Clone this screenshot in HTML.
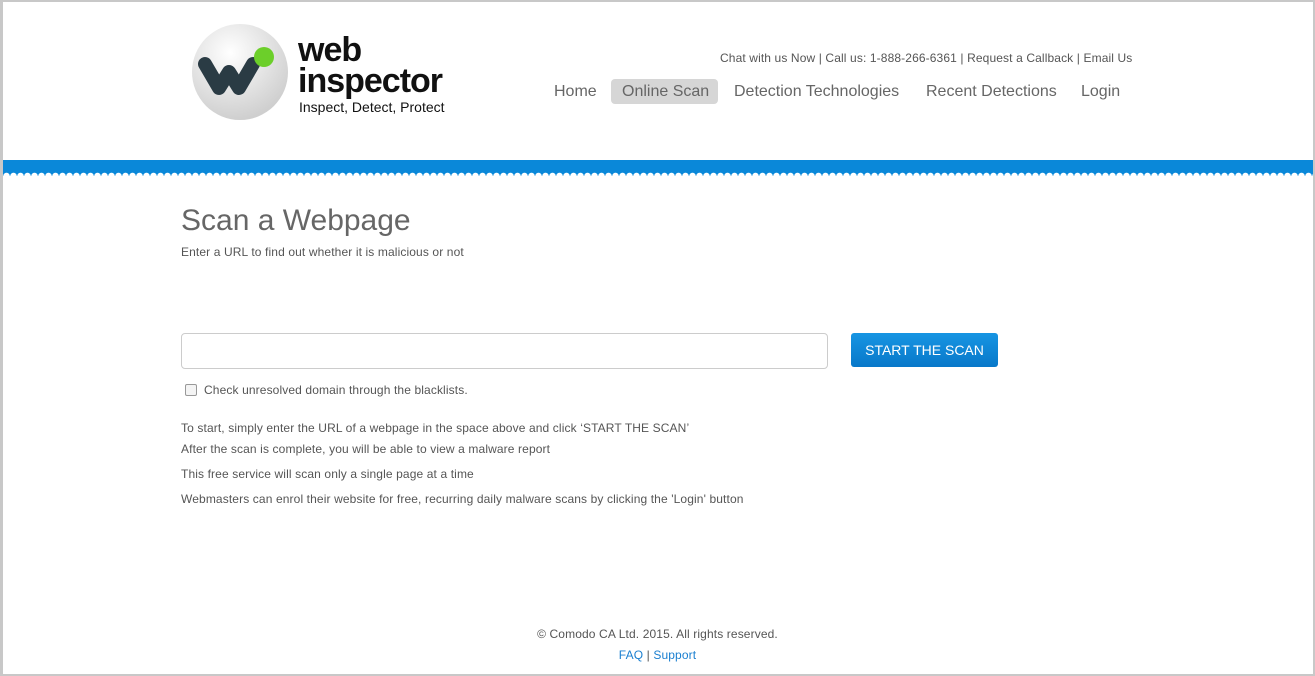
<!DOCTYPE html>
<html><head><meta charset="utf-8"><style>
*{margin:0;padding:0;box-sizing:border-box}
html,body{width:1315px;height:676px;overflow:hidden;background:#fff;font-family:"Liberation Sans",Arial,sans-serif}
.frame{position:absolute;left:0;top:0;width:1315px;height:676px;border:2px solid #c8c8c8;border-left-width:3px}
.abs{position:absolute;white-space:nowrap}
.nav a{position:absolute;top:81px;font-size:16px;color:#666;line-height:22px}
.band{position:absolute;left:3px;right:2px;top:160px;height:11px;background:#0a88d9}
.scallop{position:absolute;left:3px;right:2px;top:171px;height:5px;background:radial-gradient(circle at 3.5px 5px,#fff 3px,transparent 3.5px) 0 0/7px 5px,#0a88d9}
.sm{font-size:12px;color:#555;letter-spacing:0.12px}
</style></head><body>
<div class="frame"></div>
<svg class="abs" style="left:190px;top:22px" width="110" height="102" viewBox="0 0 110 102">
<defs><radialGradient id="g" cx="40%" cy="30%" r="70%"><stop offset="0" stop-color="#fff"/><stop offset="1" stop-color="#cfcfcf"/></radialGradient></defs>
<circle cx="50" cy="50" r="48" fill="url(#g)"/>
<path d="M15 42 L29 66 L39 50 L49 66 L63 42" fill="none" stroke="#2a3b44" stroke-width="14" stroke-linecap="round" stroke-linejoin="round"/>
<circle cx="74" cy="35" r="10" fill="#6ccf2a"/>
</svg>
<div class="abs" style="left:298px;top:33px;font-size:34px;font-weight:bold;color:#111;line-height:34px;letter-spacing:-1px">web</div>
<div class="abs" style="left:298px;top:64px;font-size:34px;font-weight:bold;color:#111;line-height:34px;letter-spacing:-1px">inspector</div>
<div class="abs" style="left:299px;top:99px;font-size:14px;color:#111">Inspect, Detect, Protect</div>
<div class="abs" style="left:720px;top:51px;font-size:12px;color:#555;letter-spacing:0.12px">Chat with us Now | Call us: 1-888-266-6361 | Request a Callback | Email Us</div>
<div class="nav">
<a style="left:554px">Home</a>
<div class="abs" style="left:611px;top:79px;width:107px;height:25px;background:#d6d6d6;border-radius:4px"></div>
<a style="left:622px">Online Scan</a>
<a style="left:734px">Detection Technologies</a>
<a style="left:926px">Recent Detections</a>
<a style="left:1081px">Login</a>
</div>
<div class="band"></div><div class="scallop"></div>
<div class="abs" style="left:181px;top:204px;font-size:30px;color:#666">Scan a Webpage</div>
<div class="abs sm" style="left:181px;top:245px">Enter a URL to find out whether it is malicious or not</div>
<div class="abs" style="left:181px;top:333px;width:647px;height:36px;border:1px solid #ccc;border-radius:4px"></div>
<div class="abs" style="left:851px;top:333px;width:147px;height:34px;background:linear-gradient(#1795e3,#0878c9);border-radius:3px;color:#fff;font-size:14px;line-height:34px;text-align:center">START THE SCAN</div>
<div class="abs" style="left:185px;top:384px;width:12px;height:12px;border:1px solid #999;border-radius:2px;background:#f4f4f4"></div>
<div class="abs sm" style="left:204px;top:383px">Check unresolved domain through the blacklists.</div>
<div class="abs sm" style="left:181px;top:421px">To start, simply enter the URL of a webpage in the space above and click ‘START THE SCAN’</div>
<div class="abs sm" style="left:181px;top:442px">After the scan is complete, you will be able to view a malware report</div>
<div class="abs sm" style="left:181px;top:467px">This free service will scan only a single page at a time</div>
<div class="abs sm" style="left:181px;top:492px">Webmasters can enrol their website for free, recurring daily malware scans by clicking the 'Login' button</div>
<div class="abs sm" style="left:0;width:1315px;text-align:center;top:627px">© Comodo CA Ltd. 2015. All rights reserved.</div>
<div class="abs sm" style="left:0;width:1315px;text-align:center;top:648px"><span style="color:#1a7fd0">FAQ</span> | <span style="color:#1a7fd0">Support</span></div>
</body></html>
